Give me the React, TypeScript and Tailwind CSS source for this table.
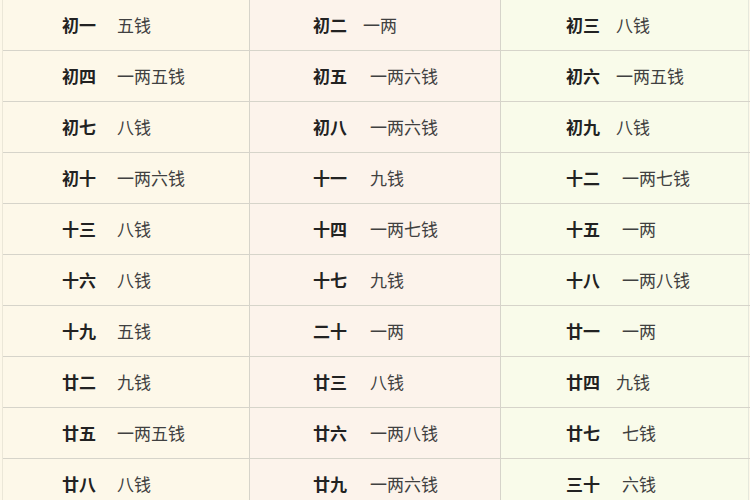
const rows: [string, string, string][][] = [
  [["初一", "五钱", "ml-[21px]"], ["初二", "一两", "ml-[16px]"], ["初三", "八钱", "ml-[16px]"]],
  [["初四", "一两五钱", "ml-[21px]"], ["初五", "一两六钱", "ml-[23px]"], ["初六", "一两五钱", "ml-[16px]"]],
  [["初七", "八钱", "ml-[21px]"], ["初八", "一两六钱", "ml-[23px]"], ["初九", "八钱", "ml-[16px]"]],
  [["初十", "一两六钱", "ml-[21px]"], ["十一", "九钱", "ml-[23px]"], ["十二", "一两七钱", "ml-[22px]"]],
  [["十三", "八钱", "ml-[21px]"], ["十四", "一两七钱", "ml-[23px]"], ["十五", "一两", "ml-[22px]"]],
  [["十六", "八钱", "ml-[21px]"], ["十七", "九钱", "ml-[23px]"], ["十八", "一两八钱", "ml-[22px]"]],
  [["十九", "五钱", "ml-[21px]"], ["二十", "一两", "ml-[23px]"], ["廿一", "一两", "ml-[22px]"]],
  [["廿二", "九钱", "ml-[21px]"], ["廿三", "八钱", "ml-[23px]"], ["廿四", "九钱", "ml-[16px]"]],
  [["廿五", "一两五钱", "ml-[21px]"], ["廿六", "一两八钱", "ml-[23px]"], ["廿七", "七钱", "ml-[22px]"]],
  [["廿八", "八钱", "ml-[21px]"], ["廿九", "一两六钱", "ml-[23px]"], ["三十", "六钱", "ml-[22px]"]],
];

const columns = [
  "w-[247px] pl-[59px] bg-[#fdf8e9] border-r border-[#d6d4ca]",
  "w-[251px] pl-[63px] bg-[#fcf3eb] border-r border-[#d6d4ca]",
  "w-[248px] pl-[65px] bg-[#f9fbea] border-r border-[#e6e8dc]",
];

export default function App() {
  return (
    <div className="w-[750px] h-[500px] overflow-hidden bg-[#fdf8e9] font-['Noto_Sans_CJK_SC',sans-serif] text-[17px]">
      <div className="ml-[2px] border-l border-[#ebe7d8]">
        {rows.map((row, i) => (
          <div key={i} className="flex h-[51px] border-b border-[#d6d4ca]">
            {row.map(([label, value, gap], j) => (
              <div key={j} className={`flex items-center ${columns[j]}`}>
                <span className="font-bold text-[#222]">{label}</span>
                <span className={`text-[#404040] ${gap}`}>{value}</span>
              </div>
            ))}
          </div>
        ))}
      </div>
    </div>
  );
}
